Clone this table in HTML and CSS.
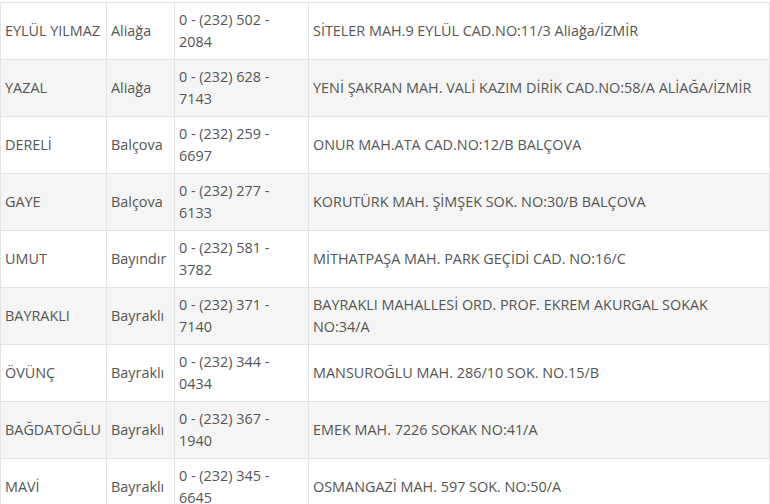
FILE: index.html
```html
<!DOCTYPE html>
<html lang="tr">
<head>
<meta charset="utf-8">
<link rel="stylesheet" href="styles.css">
</head>
<body>
<div class="wrap">
<table class="list">
<colgroup>
<col class="c-name"><col class="c-town"><col class="c-phone"><col class="c-addr">
</colgroup>
<tbody>
<tr><td>EYLÜL YILMAZ</td><td>Aliağa</td><td>0 - (232) 502 - 2084</td><td>SİTELER MAH.9 EYLÜL CAD.NO:11/3 Aliağa/İZMİR</td></tr>
<tr><td>YAZAL</td><td>Aliağa</td><td>0 - (232) 628 - 7143</td><td>YENİ ŞAKRAN MAH. VALİ KAZIM DİRİK CAD.NO:58/A ALİAĞA/İZMİR</td></tr>
<tr><td>DERELİ</td><td>Balçova</td><td>0 - (232) 259 - 6697</td><td>ONUR MAH.ATA CAD.NO:12/B BALÇOVA</td></tr>
<tr><td>GAYE</td><td>Balçova</td><td>0 - (232) 277 - 6133</td><td>KORUTÜRK MAH. ŞİMŞEK SOK. NO:30/B BALÇOVA</td></tr>
<tr><td>UMUT</td><td>Bayındır</td><td>0 - (232) 581 - 3782</td><td>MİTHATPAŞA MAH. PARK GEÇİDİ CAD. NO:16/C</td></tr>
<tr><td>BAYRAKLI</td><td>Bayraklı</td><td>0 - (232) 371 - 7140</td><td>BAYRAKLI MAHALLESİ ORD. PROF. EKREM AKURGAL SOKAK NO:34/A</td></tr>
<tr><td>ÖVÜNÇ</td><td>Bayraklı</td><td>0 - (232) 344 - 0434</td><td>MANSUROĞLU MAH. 286/10 SOK. NO.15/B</td></tr>
<tr><td>BAĞDATOĞLU</td><td>Bayraklı</td><td>0 - (232) 367 - 1940</td><td>EMEK MAH. 7226 SOKAK NO:41/A</td></tr>
<tr><td>MAVİ</td><td>Bayraklı</td><td>0 - (232) 345 - 6645</td><td>OSMANGAZİ MAH. 597 SOK. NO:50/A</td></tr>
</tbody>
</table>
</div>
</body>
</html>
```
FILE: styles.css
```css
html, body {
  margin: 0;
  padding: 0;
  background: #fff;
}
.wrap {
  padding-top: 2px;
  width: 769px;
}
.list {
  width: 769px;
  border-collapse: collapse;
  table-layout: fixed;
  font-family: "Open Sans", "DejaVu Sans", sans-serif;
  font-size: 14.4px;
  line-height: 22.5px;
  color: #555;
}
.c-name { width: 106px; }
.c-town { width: 68px; }
.c-phone { width: 134px; }
.c-addr { width: 461px; }
.list td {
  border: 1px solid #e2e4e3;
  padding: 5.5px 5px 5.5px 4px;
  height: 45px;
  vertical-align: middle;
  white-space: normal;
}
.list tr:nth-child(even) td {
  background: #f4f5f4;
}
```
